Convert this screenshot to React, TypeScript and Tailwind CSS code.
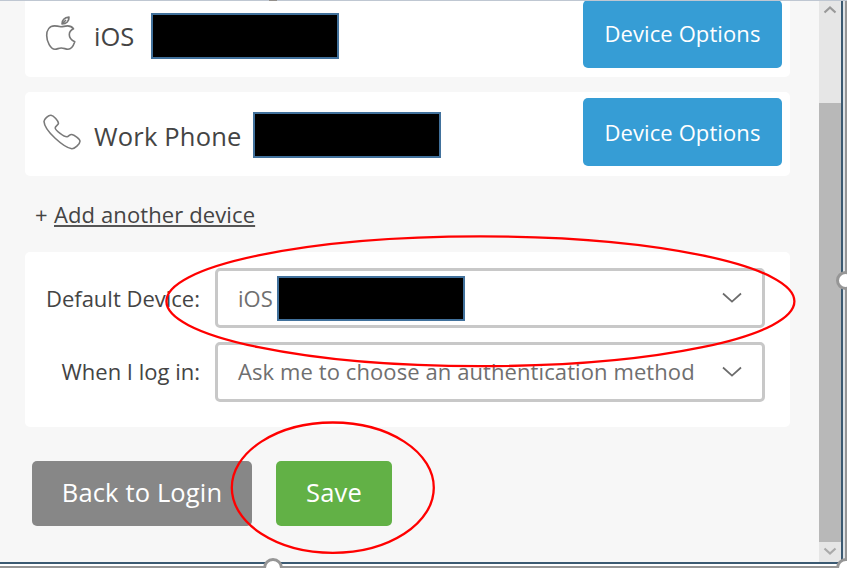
import clsx from "clsx";

interface ClassNameProps {
  className?: string;
}

const Redacted = ({className}: ClassNameProps) => (
  <div className={clsx("w-[188px] shrink-0 border-2 border-[#41719c] bg-black", className)} />
);

const AppleIcon = () => (
  <svg className="h-[36px] w-[32px] shrink-0" viewBox="0 0 32 36" fill="none" stroke="#777" strokeWidth="1.6" strokeLinejoin="round">
    <path d="M16 11.8C13.5 11.2 12 10.9 9.5 10.9C4.5 10.9 1.7 15 1.7 20.5C1.7 26.5 5.5 34.2 10 34.2C12.5 34.2 13.5 33 16.2 33C19 33 20.5 34.2 23 34.2C26.5 34.2 28.5 30.5 29.8 26.7C26.3 25 24.3 22.5 24.3 19.7C24.3 17 25.5 15.3 28.5 13.8C27 11.7 25 10.9 22.5 10.9C20 10.9 18.5 11.6 16 11.8Z" />
    <path d="M17 9C17 5 19.5 2.5 24 2C24.3 6 21.5 9 17 9ZM17 9L21 5" />
  </svg>
);

const PhoneIcon = () => (
  <svg className="h-[38px] w-[40px] shrink-0" viewBox="0 0 40 38" fill="none" stroke="#7a7a7a" strokeWidth="1.6" strokeLinejoin="round">
    <path d="M2 8.5C2 6 6.5 2 9 2.2C11.5 2.5 16.5 8 16.5 10.2C16.5 11.8 13 13 13.2 15C13.5 17.5 22 24 25 23.8C26.8 23.6 27.5 21.3 29.8 21.5C32 21.8 38 26 38 28.3C38 31 32.5 36 29.8 35.8C22 34.5 2.5 18 2 8.5Z" />
  </svg>
);

const ChevronDown = () => (
  <svg className="h-3 w-5" viewBox="0 0 20 12" fill="none" stroke="#6b6b6b" strokeWidth="1.7">
    <path d="M1 1.5L10 9.7L19 1.5" />
  </svg>
);

const DeviceOptions = ({className}: ClassNameProps) => (
  <button className={clsx("h-[68px] w-[199px] shrink-0 rounded-[5px] bg-[#369dd5] text-[22px] tracking-[0.1px] whitespace-nowrap text-white", className)}>
    Device Options
  </button>
);

const Scrollbar = () => (
  <div className="flex w-[22px] shrink-0 flex-col items-center bg-[#e6e6e6]">
    <svg className="mt-1 h-3 w-3.5 shrink-0" viewBox="0 0 14 12" fill="none" stroke="#999" strokeWidth="2.2">
      <path d="M1.5 8.5L7 3.5L12.5 8.5" />
    </svg>
    <div className="mt-[87px] w-full flex-1 bg-[#b8b8b8]" />
    <svg className="my-1 h-3 w-3.5 shrink-0" viewBox="0 0 14 12" fill="none" stroke="#aaa" strokeWidth="2.2">
      <path d="M1.5 2.5L7 7.5L12.5 2.5" />
    </svg>
  </div>
);

const Annotations = () => (
  <svg className="pointer-events-none absolute inset-0" width="847" height="568" viewBox="0 0 847 568" fill="none">
    <ellipse cx="480.4" cy="301.3" rx="314" ry="64.9" stroke="#f00" strokeWidth="2.3" />
    <ellipse cx="332.8" cy="487.7" rx="101" ry="65.2" stroke="#f00" strokeWidth="2.3" />
    <g fill="#fff" stroke="#969696" strokeWidth="3">
      <circle cx="845.5" cy="280.5" r="8" />
      <circle cx="273" cy="568" r="8.5" />
      <circle cx="846" cy="568" r="8.5" />
    </g>
  </svg>
);

const App = () => {
  return (
    <div className="relative flex h-[568px] w-[847px] flex-col overflow-hidden bg-white font-['Open_Sans',sans-serif] text-[#444]">
      <div className="flex h-[562px] shrink-0">
        <main className="flex w-[819px] shrink-0 flex-col bg-[#f7f7f7] pl-[25px]">
          <section className="flex h-[77px] w-[765px] shrink-0 items-start rounded-b-[5px] bg-white pr-2 pl-5">
            <div className="mt-[15px]"><AppleIcon /></div>
            <span className="mt-[18px] ml-[17px] w-[57px] text-[25.5px] leading-9">iOS</span>
            <Redacted className="mt-[13px] h-[46px]" />
            <DeviceOptions className="ml-auto pb-px" />
          </section>
          <section className="mt-[15px] flex h-[84px] w-[765px] shrink-0 items-start rounded-[5px] bg-white pr-2 pl-[17px]">
            <div className="mt-[21px]"><PhoneIcon /></div>
            <span className="mt-[26px] ml-[12px] w-[159px] text-[25.5px] leading-9 tracking-[0.2px] whitespace-nowrap">Work Phone</span>
            <Redacted className="mt-[20px] h-[46px]" />
            <DeviceOptions className="mt-[6px] ml-auto pt-px" />
          </section>
          <div className="mt-[22px] ml-[10px] flex h-8 shrink-0 items-center text-[22px] leading-8">
            <span className="w-[19px]">+</span>
            <a className="tracking-[0.11px] underline decoration-[#555] decoration-[1.5px] underline-offset-[2px]">Add another device</a>
          </div>
          <section className="mt-[22px] flex h-[175px] w-[765px] shrink-0 flex-col gap-[14px] rounded-[5px] bg-white pt-[16px] pr-[25px] text-[22px]">
            <div className="flex h-[60px] items-center">
              <label className="w-[175px] pt-px text-right whitespace-nowrap">Default Device:</label>
              <div className="ml-[15px] flex h-[60px] flex-1 items-center rounded-[5px] border-3 border-[#c8c8c8] pr-[20px] pl-5 text-[#6f6f6f]">
                <span className="w-[39px] pt-px">iOS</span>
                <Redacted className="mt-px h-[45px]" />
                <div className="ml-auto"><ChevronDown /></div>
              </div>
            </div>
            <div className="flex h-[60px] items-center">
              <label className="w-[175px] pb-px text-right whitespace-nowrap">When I log in:</label>
              <div className="ml-[15px] flex h-[60px] flex-1 items-center rounded-[5px] border-3 border-[#c8c8c8] pr-[20px] pl-5 text-[#6f6f6f]">
                <span className="pb-px tracking-[0.09px] whitespace-nowrap">Ask me to choose an authentication method</span>
                <div className="ml-auto"><ChevronDown /></div>
              </div>
            </div>
          </section>
          <div className="mt-[34px] ml-[7px] flex gap-[24px] text-[25.5px] tracking-[0.15px] text-white">
            <button className="h-[65px] w-[220px] rounded-[5px] bg-[#878787] pb-[3px] whitespace-nowrap">Back to Login</button>
            <button className="h-[65px] w-[116px] rounded-[5px] bg-[#62b146] pb-[3px]">Save</button>
          </div>
        </main>
        <Scrollbar />
        <div className="w-[2px] bg-[#3b5a72]" />
        <div className="w-[2px] bg-[#dfe3e6]" />
        <div className="flex-1 bg-[#969696]" />
      </div>
      <div className="h-[2px] w-[843px] shrink-0 bg-[#3b5a72]" />
      <div className="mt-[2px] h-[2px] shrink-0 bg-[#969696]" />
      <div className="absolute inset-x-0 top-0 h-px bg-[#bfc7d2]" />
      <div className="absolute top-0 left-[269px] h-px w-2 bg-[#938f8b]" />
      <Annotations />
    </div>
  );
};

export default App;
